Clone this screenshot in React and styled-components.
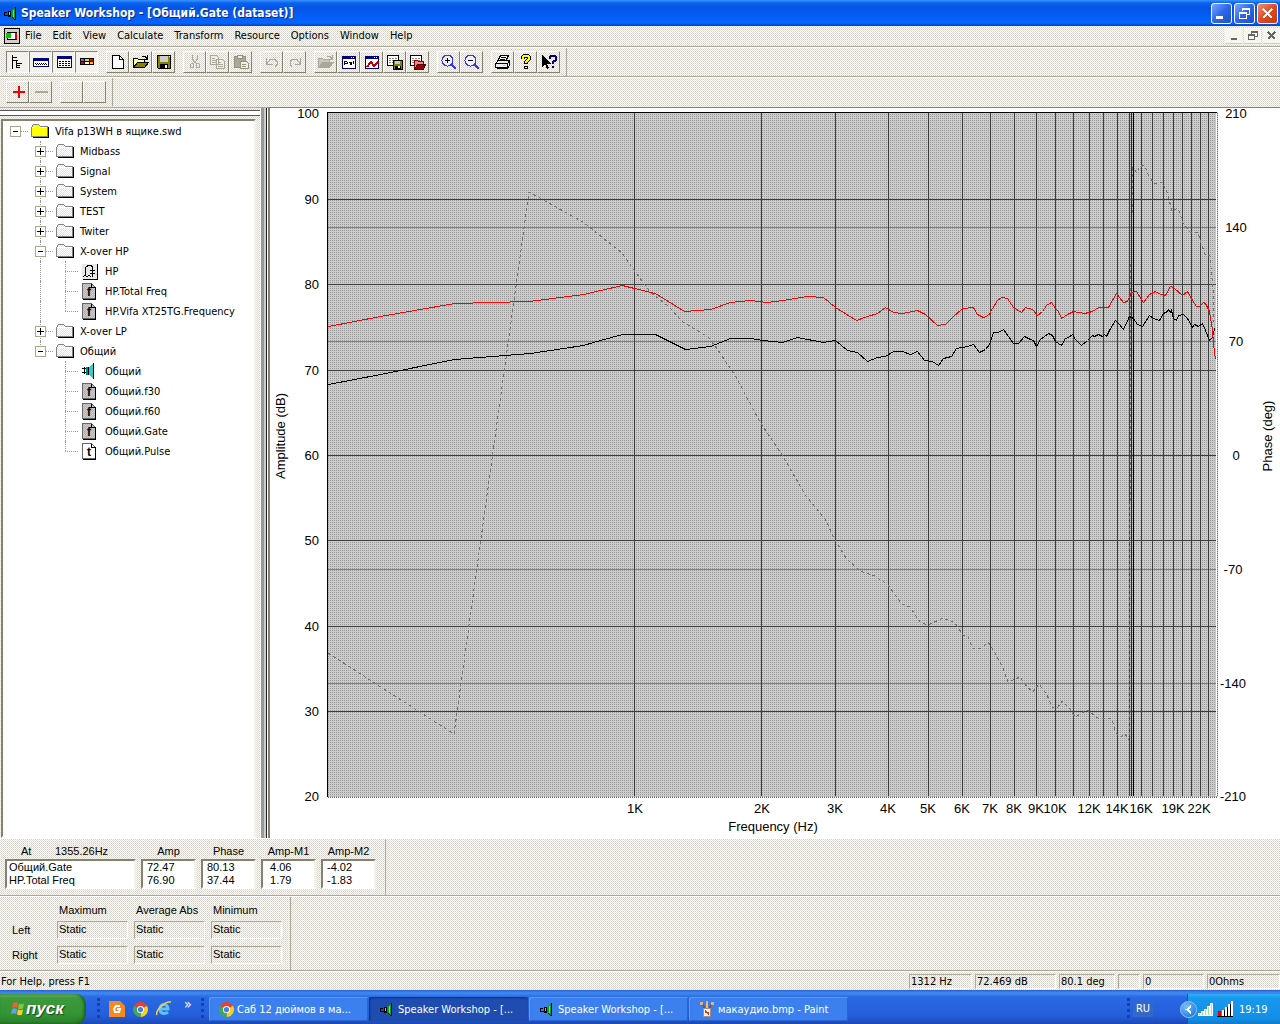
import React, { useState } from 'react';
import styled, { createGlobalStyle, css } from 'styled-components';

const UI_FONT = `"DejaVu Sans Condensed", "Noto Sans", sans-serif`;
const DIALOG_FONT = `"Liberation Sans", Arial, sans-serif`;

const GlobalStyle = createGlobalStyle`
  * { box-sizing: border-box; }
  body {
    margin: 0;
    font-family: ${UI_FONT};
    font-size: 11px;
    color: #000;
  }
  button {
    font: inherit;
    color: inherit;
    padding: 0;
    margin: 0;
    background: none;
    border: none;
  }
  svg { shape-rendering: crispEdges; display: block; }
`

// 256 colour face: four tones in a 2x2 cell
const face = css`
  background: conic-gradient(#ffffcc 25%, #d0d0cc 0 50%, #ffffff 0 75%, #e2e0d8 0) 0 0 / 2px 2px;
`

const Page = styled.div`
  min-height: 100vh;
  display: flex;
  flex-direction: column;
  ${face}
`

/* ---------- title bar ---------- */
const TitleBar = styled.header`
  height: 26px;
  display: flex;
  align-items: center;
  gap: 2px;
  padding: 0 2px 0 3px;
  background: linear-gradient(#3a93ff 0, #0a63ee 3px, #0554e4 8px, #0460f8 18px, #0366ff 23px, #0040c0 26px);
`
const Title = styled.h1`
  flex: 1;
  margin: 0;
  font-size: 12px;
  line-height: 16px;
  font-weight: bold;
  color: #fff;
  text-shadow: 1px 1px 0 #0a2a80;
  white-space: nowrap;
`
const CaptionButton = styled.button`
  width: 21px;
  height: 21px;
  display: flex;
  align-items: center;
  justify-content: center;
  border: 1px solid #fff;
  border-radius: 3px;
  background: ${props => props.$close
    ? 'linear-gradient(135deg, #f09078, #dc4a24 50%, #c03c14)'
    : 'linear-gradient(135deg, #7aa8ff, #2e66e8 50%, #1c50cc)'};
`

/* ---------- menu ---------- */
const MenuBar = styled.nav`
  height: 21px;
  display: flex;
  align-items: center;
  padding-left: 4px;
  border-bottom: 1px solid #aca899;
`
const MenuItems = styled.div`
  flex: 1;
  display: flex;
  gap: 11px;
  padding: 0 0 2px 5px;
`
const MenuItem = styled.button`
  line-height: 15px;
`
const MdiButtons = styled.div`
  display: flex;
  gap: 2px;
`
const MdiButton = styled.button`
  width: 17px;
  height: 16px;
  display: flex;
  align-items: center;
  justify-content: center;
  background: #f6f5ee;
  border-bottom: 1px solid #d0cdbc;
`

/* ---------- tool bars ---------- */
const ToolRow = styled.div`
  height: 30px;
  display: flex;
  border-top: 1px solid #fff;
  border-bottom: 1px solid ${props => props.$last ? 'transparent' : '#aca899'};
`
const Toolbar = styled.div`
  display: flex;
  align-items: center;
  gap: 8px;
  padding: 0 6px;
  border-right: 1px solid #aca899;
`
const ToolGroup = styled.div`
  display: flex;
`
const ToolButton = styled.button`
  width: 23px;
  height: 22px;
  display: flex;
  align-items: center;
  justify-content: center;
  border: 1px solid;
  border-color: ${props => props.$pressed ? '#848284 #fff #fff #848284' : '#fff #84826f #84826f #fff'};
  ${props => props.$pressed && 'background: #f3f2ea;'}
`

/* ---------- workspace ---------- */
const Workspace = styled.main`
  flex: 1;
  display: flex;
  min-height: 0;
`
const Sidebar = styled.aside`
  width: 268px;
  display: flex;
  border-top: 1px solid #aca899;
`
const Dock = styled.div`
  flex: 1;
  display: flex;
  flex-direction: column;
`
const Grip = styled.div`
  height: 6px;
  margin: 2px 0 3px;
  border: solid #555;
  border-width: 1px 0;
  background: #fff;
`
const Splitter = styled.div`
  width: 8px;
  background: linear-gradient(90deg, #fff 0 1px, #999 1px 4px, #ccc 4px 6px, #222 6px 7px, #fff 7px);
`
const TreeBox = styled.div`
  flex: 1;
  margin: 0 4px 0 1px;
  border: 2px solid;
  border-color: #84826f #f4f3ea #fff #84826f;
  background: #fff;
`
const TreeList = styled.ul`
  list-style: none;
  margin: 0;
  padding: 0;
`
const TreeRow = styled.div`
  height: 20px;
  display: flex;
  align-items: center;
`
const Guide = styled.span`
  position: relative;
  width: 25px;
  height: 20px;
  flex: none;
  display: flex;
  align-items: center;
  justify-content: center;
  &::before {
    content: '';
    position: absolute;
    left: 12px;
    top: 0;
    height: ${props => ({ full: '20px', half: '10px', none: '0' })[props.$line]};
    border-left: 1px dotted #999;
  }
  &::after {
    content: '';
    position: absolute;
    left: 12px;
    top: 10px;
    width: ${props => props.$branch ? '13px' : '0'};
    border-top: 1px dotted #999;
  }
`
const Toggle = styled.button`
  position: relative;
  z-index: 1;
  width: 11px;
  height: 11px;
  background: #fff;
  border: 1px solid #a8a890;
`
const NodeIcon = styled.span`
  width: 27px;
  padding-left: 3px;
  flex: none;
`
const NodeLabel = styled.span`
  padding-top: 1px;
  line-height: 15px;
  white-space: nowrap;
`

const ChartPane = styled.section`
  flex: 1;
  min-width: 0;
  display: flex;
  background: #fff;
  border: solid #84826f;
  border-width: 1px 0 0 2px;
`
const ChartSvg = styled.svg`
  flex: 1;
  min-width: 0;
  overflow: visible;
  font-family: ${DIALOG_FONT};
  font-size: 13px;
`

/* ---------- readouts ---------- */
const DialogRow = styled.div`
  display: flex;
  height: ${props => props.$height};
  border-top: 1px solid #fff;
  border-bottom: 1px solid #aca899;
  font-family: ${DIALOG_FONT};
`
const DialogBar = styled.div`
  border-right: 1px solid #aca899;
  padding: ${props => props.$pad};
`
const ReadoutTable = styled.table`
  table-layout: fixed;
  width: 381px;
  border-spacing: 5px 0;
  line-height: 13px;
  th {
    height: 16px;
    padding: 0;
    font-weight: normal;
  }
  th:first-child { padding-right: 12px; }
  td {
    padding: 0 4px;
    background: #fff;
    border: 2px solid;
    border-color: #84826f #f4f3ea #fff #84826f;
    white-space: pre;
  }
  td:first-child { padding: 0 2px; }
  tbody tr:first-child td { border-bottom: none; }
  tbody tr:last-child td { border-top: none; }
`
const At = styled.span`
  display: inline-block;
  width: 34px;
  text-align: left;
`
const StatsTable = styled.table`
  border-spacing: 0;
  table-layout: fixed;
  width: 288px;
  th, td {
    height: 25px;
    padding: 0;
    font-weight: normal;
    text-align: left;
  }
  thead th, thead td { height: 15px; }
  thead th { padding-left: 2px; }
  tbody th { padding-left: 12px; }
`
const StaticBox = styled.div`
  width: 71px;
  height: 18px;
  padding-left: 1px;
  line-height: 15px;
  border: 1px solid;
  border-color: #aca899 #fff #fff #aca899;
`

/* ---------- status ---------- */
const StatusBar = styled.footer`
  height: 19px;
  display: flex;
  gap: 3px;
  padding: 2px 0 1px 1px;
  line-height: 15px;
  border-top: 1px solid #fff;
`
const StatusHelp = styled.span`
  flex: 1;
`
const StatusPane = styled.span`
  width: ${props => props.$width};
  padding-left: 1px;
  border: 1px solid;
  border-color: #aca899 #fff #fff #aca899;
  line-height: 14px;
`

/* ---------- task bar ---------- */
const TaskBar = styled.div`
  height: 34px;
  display: flex;
  color: #fff;
  background: linear-gradient(#2c60d8 0, #3f8cf0 3px, #2a68e4 7px, #245edb 26px, #1c48b4 34px);
`
const StartButton = styled.button`
  width: 86px;
  margin-top: 4px;
  padding-left: 10px;
  display: flex;
  align-items: center;
  gap: 1px;
  border-radius: 0 10px 10px 0;
  background: linear-gradient(#6cb868 0, #3c9a3c 4px, #339433 20px, #2a7c2a 30px);
  box-shadow: inset -2px 0 3px #1c5c1c;
  font: italic bold 17px "Liberation Sans", sans-serif;
  text-shadow: 1px 1px 1px #1a4a1a;
`
const TaskGrip = styled.span`
  width: 3px;
  margin: 8px 0 6px ${props => props.$left};
  border-left: 3px dotted #1840a8;
`
const QuickLaunch = styled.div`
  display: flex;
  align-items: center;
  gap: 8px;
  padding: 4px 0 0 9px;
  width: 101px;
  svg { shape-rendering: auto; }
`
const More = styled.span`
  font-size: 14px;
  line-height: 12px;
  padding: 0 0 10px 4px;
`
const Tasks = styled.div`
  flex: 1;
  display: flex;
  gap: 1px;
  padding: 7px 0 3px 5px;
`
const TaskButton = styled.button`
  width: 159px;
  height: 24px;
  padding: 0 10px;
  display: flex;
  align-items: center;
  gap: 3px;
  border-radius: 2px;
  white-space: nowrap;
  background: ${props => props.$active ? '#1e4cb0' : '#3c80f0'};
  box-shadow: ${props => props.$active ? 'inset 1px 1px 2px #10307c' : 'inset 1px 1px 0 #5c9cf8, inset -1px -1px 0 #2c64d0'};
`
const Lang = styled.span`
  align-self: center;
  margin: 4px 34px 0 3px;
  padding: 0 3px;
  line-height: 16px;
  background: #3468c8;
`
const Tray = styled.div`
  position: relative;
  width: 93px;
  margin-top: 4px;
  display: flex;
  align-items: center;
  gap: 3px;
  padding-left: 10px;
  background: linear-gradient(#2cb0f8 0, #1898ec 4px, #1290e8 24px, #1078c8 30px);
  border-left: 1px solid #0c5cb0;
`
const TrayArrow = styled.button`
  position: absolute;
  left: -8px;
  top: 7px;
  width: 17px;
  height: 17px;
  border-radius: 50%;
  border: 1px solid #8cc8ff;
  background: radial-gradient(circle at 35% 30%, #78c0ff, #1468d8);
  display: flex;
  align-items: center;
  justify-content: center;
`
const Clock = styled.time`
  padding-left: 3px;
`

/* ---------- drawings ---------- */
const Svg = ({ w = 16, h = 16, children }) => (
  <svg width={w} height={h} viewBox={`0 0 ${w} ${h}`} fill="none" aria-hidden="true">{children}</svg>
)

const Patterns = () => (
  <svg width="0" height="0" style={{ position: 'absolute' }} aria-hidden="true">
    <defs>
      <pattern id="yellow" width="2" height="2" patternUnits="userSpaceOnUse">
        <path fill="#ffffff" d="M0 0h2v2H0z" /><path fill="#ffff00" d="M0 0h1v1H0zM1 1h1v1H1z" />
      </pattern>
      <pattern id="cyan" width="2" height="2" patternUnits="userSpaceOnUse">
        <path fill="#cccccc" d="M0 0h2v2H0z" /><path fill="#00ffff" d="M0 0h1v1H0zM1 1h1v1H1z" />
      </pattern>
      <pattern id="plot" width="2" height="2" patternUnits="userSpaceOnUse">
        <path fill="#cccccc" d="M0 0h2v2H0z" /><path fill="#999999" d="M0 0h1v1H0z" />
      </pattern>
    </defs>
  </svg>
)

// small green loudspeaker with its lead, used for the program itself
const SpeakerIcon = () => (
  <Svg>
    <path fill="#000" d="M1 7h3v1H1zM1 8h1v3H1zM2 10h5v1H2zM5 6h3v6H5z" />
    <path fill="#00a030" d="M8 6h1V5h1V4h1V3h1v11h-1v-1h-1v-1H9v-1H8z" />
    <path fill="#40ff60" d="M10 5h1v7h-1zM6 7h1v3H6z" />
    <path fill="#000" d="M12 2h1v13h-1zM9 12h1v1h1v1h1v1h-1v-1h-1v-1H9z" />
  </Svg>
)
const FolderIcon = ({ fill = 'url(#yellow)' }) => (
  <Svg w={18} h={16}>
    <path fill="#000" d="M2 14h16v1H2zM17 4h1v11h-1z" />
    <path fill={fill} stroke="#848484" d="M.5 13.500v-9l2-3h5l2 2h7v10z" />
    <path stroke="#fff" d="M1 4.500h15" />
  </Svg>
)
const PageIcon = ({ letter, fill }) => (
  <Svg w={16} h={18}>
    <path fill={fill} stroke="#666" d="M1.500 1.500h9l4 4v11h-13z" />
    <path stroke="#000" d="M14.500 5v12M2 17.500h13M10.500 2v3.500h4" />
    <text x="8" y="14" textAnchor="middle" fontFamily="Liberation Sans" fontWeight="bold" fontSize="12" fill="#000">{letter}</text>
  </Svg>
)
const CircuitIcon = () => (
  <Svg w={17} h={17}>
    <path fill="#e8e8e4" d="M1 1h15v15H1z" />
    <path stroke="#000" d="M2 16.500h15M16.500 1v16" />
    <path stroke="#000" d="M4.500 13V3.500M5 3.500h1l1-1h3l1 1h1M11.500 3v4M9 7.500h5M9 10.500h5M11.500 7v7M2 14l2-2 2 2 2-2 2 2" />
  </Svg>
)
const DriverIcon = () => (
  <Svg w={16} h={16}>
    <path stroke="#000" d="M1 5.500h4M1 9.500h4M3.500 4v7" />
    <path fill="#008484" d="M5 4h3v8H5z" />
    <path fill="#33cccc" d="M8 4l4-4v16l-4-4z" />
    <path fill="#000" d="M12 0h1v16h-1zM7 4h1v8H7z" />
  </Svg>
)

const ICONS = {
  tree: <><path stroke="#000" d="M2.500 1v14M3 3.500h4M3 6.500h5M6.500 7v7M6 9.500h6M6 11.500h4M6 13.500h4" /></>,
  bar: <><path fill="#fff" stroke="#000084" d="M.5 4.500h15v8H.5z" /><path fill="#000084" d="M0 4h16v3H0z" /><path stroke="#000" strokeDasharray="1 1" d="M2 9.500h12M3 10.500h11" /></>,
  panel: <><path fill="#fff" stroke="#000084" d="M1.500 2.500h14v11h-14z" /><path fill="#000084" d="M1 2h15v3H1z" /><path stroke="#000" strokeDasharray="2 1" d="M3 7.500h11M3 9.500h11M3 11.500h11" /></>,
  cells: <><path fill="#fff" stroke="#000" d="M1.500 4.500h13v6h-13z" /><path fill="#6666ee" d="M2 5h4v2H2z" /><path fill="#ffcc00" d="M6 5h4v2H6z" /><path fill="#e00000" d="M10 5h4v2h-4zM2 8h4v2H2z" /><path fill="#ffcc00" d="M11 8h3v2h-3z" /><path stroke="#000" d="M5.500 5v5M10.500 5v5M2 7.500h12" /></>,
  new: <path fill="#fff" stroke="#000" d="M2.500 1.500h7l4 4v9h-11zM9.500 1.500v4h4" />,
  open: <><path fill="#ffff99" stroke="#000" d="M.5 13.500v-9h4l1 1h6v3h-6l-5 5" /><path fill="#848400" stroke="#000" d="M.5 13.500l4-5h11l-4 5z" /><path stroke="#000" d="M9 2.500h3l2 2M14.500 1v4h-3" /></>,
  save: <><path fill="#848400" stroke="#000" d="M1.500 1.500h13v13h-12l-1-1z" /><path fill="#ccc" d="M4 2h8v6H4z" /><path fill="#000" d="M4 10h8v4H4z" /><path fill="#fff" d="M9 11h2v3H9zM13 2h1v1h-1z" /></>,
  cut: <><path stroke="#aca899" d="M5.500 1v4l3 4M10.500 1v4l-3 4" /><path stroke="#aca899" d="M4.500 9.500h2v4h-3v-3zM9.500 9.500h2l1 1v3h-3z" /></>,
  copy: <path fill="#eee" stroke="#aca899" d="M.5 1.500h6l2 2v7h-8zM6.500 5.500h6l2 2v7h-8zM2 4.500h3M2 6.500h4M2 8.500h4M8 8.500h3M8 10.500h5M8 12.500h5" />,
  paste: <><path fill="#aca899" stroke="#94927c" d="M1.500 2.500h11v11h-11z" /><path fill="#eee" stroke="#94927c" d="M4.500 1.500h5v3h-5zM7.500 7.500h6l2 2v5h-8zM9 10.500h4M9 12.500h4" /></>,
  undo: <path stroke="#aca899" d="M2.500 4v6h6M3 9.500l3-4h5l2 2v3l-2 2" />,
  redo: <path stroke="#aca899" d="M13.500 4v6h-6M13 9.500l-3-4h-5l-2 2v3l2 2" />,
  openOff: <><path fill="#ccc8b8" stroke="#aca899" d="M.5 13.500v-9h4l1 1h6v3" /><path fill="#aca899" d="M0 14l4-6h12l-4 6z" /><path stroke="#aca899" d="M9 2.500h3l2 2M14.500 1v4h-3" /></>,
  props: <><path fill="#fff" stroke="#000084" d="M1.500 2.500h13v12h-13z" /><path fill="#000084" d="M1 2h14v3H1z" /><path fill="#fff" d="M10 3h1v1h-1zM12 3h1v1h-1z" /><path stroke="#000" d="M3.500 7v4M4 7.500h2M4 9.500h2M6.500 8v2M7.500 8.500h2v2M10.500 8v3M12.500 7v3" /></>,
  chart: <><path fill="#fff" stroke="#000084" d="M1.500 2.500h13v12h-13z" /><path fill="#000084" d="M1 2h14v3H1z" /><path fill="#fff" d="M10 3h1v1h-1zM12 3h1v1h-1z" /><path stroke="#c00000" strokeWidth="2" d="M3 13l4-5 3 4 4-4" /></>,
  saveSheet: <><path fill="#fff" stroke="#000" d="M.5 1.500h11v10H.5z" /><path stroke="#848484" strokeDasharray="2 1" d="M2 4.500h9M2 6.500h9M2 8.500h9" /><path fill="#848400" stroke="#000" d="M6.500 6.500h9v9h-9z" /><path fill="#ccc" d="M8 7h5v3H8z" /><path fill="#000" d="M8 12h6v3H8z" /><path fill="#fff" d="M11 12h2v2h-2z" /></>,
  loadSheet: <><path fill="#fff" stroke="#000" d="M.5 1.500h11v10H.5z" /><path stroke="#848484" strokeDasharray="2 1" d="M2 4.500h9M2 6.500h9M2 8.500h9" /><path fill="#ff8080" stroke="#840000" d="M4.500 14.500v-8h3l1 1h5v3" /><path fill="#a00000" stroke="#400000" d="M4.500 15.500l3-5h8l-2 5z" /></>,
  zoomIn: <><circle cx="6.500" cy="6.500" r="5.500" fill="#f0f0ff" stroke="#3333ff" /><path stroke="#3333ff" strokeWidth="2" d="M11 11l4 4" /><path stroke="#000" d="M4 6.500h5M6.500 4v5" /></>,
  zoomOut: <><circle cx="6.500" cy="6.500" r="5.500" fill="#f0f0ff" stroke="#3333ff" /><path stroke="#3333ff" strokeWidth="2" d="M11 11l4 4" /><path stroke="#000" d="M4 6.500h5" /></>,
  print: <><path fill="#fff" stroke="#000" d="M5.500 1.500h8l-3 6h-8z" /><path fill="#eee" stroke="#000" d="M.5 9.500l3-3h11l-2 3zM.5 9.500h12v4H.5zM12.500 9.500l2-3v5l-2 2.500" /><path stroke="#000" d="M6 3.500h5M5 5.500h5M2 14.500h11" /><path fill="#e8e800" d="M8 11h3v1H8z" /></>,
  help: <><path stroke="#000" strokeWidth="4" d="M5 5V3l1-1h4l1 1v2L8 8v2M8 12v3" /><path stroke="#ffff00" strokeWidth="2" d="M5 5V3l1-1h4l1 1v2L8 8v1M8 13v1" /></>,
  whatsThis: <><path fill="#000" d="M1 1v12l3-3 2 5 2-1-2-4h4z" /><path stroke="#000084" strokeWidth="2" d="M9 5V3l1-1h4l1 1v3l-3 2v2M12 12v2" /></>,
  plus: <path stroke="#f00000" strokeWidth="2" d="M3 8h12M9 2v12" />,
  minus: <path stroke="#aca899" strokeWidth="2" d="M2 8h13" />,
}

const ChromeIcon = () => (
  <svg width="15" height="15" viewBox="0 0 16 16" style={{ shapeRendering: 'auto' }} aria-hidden="true">
    <path fill="#e84030" d="M8 8L1.100 4A8 8 0 0 1 14.900 4z" />
    <path fill="#f8d020" d="M8 8l6.900-4A8 8 0 0 1 8 16z" />
    <path fill="#40a850" d="M8 8v8A8 8 0 0 1 1.100 4z" />
    <circle cx="8" cy="8" r="3.800" fill="#fff" /><circle cx="8" cy="8" r="2.800" fill="#4080e8" />
  </svg>
)
const PaintIcon = () => (
  <Svg>
    <path stroke="#905030" strokeWidth="2" d="M3 2l3 6M13 2l-3 6" />
    <path stroke="#e8c070" strokeWidth="2" d="M8 1v7" />
    <path fill="#d8b090" d="M1 1h3v3H1zM12 1h3v3h-3zM7 0h2v2H7z" />
    <path fill="#f4f0f0" stroke="#a09088" d="M4.500 7.500h7v8h-7z" />
    <path stroke="#d04020" strokeWidth="2" d="M6 10l4 3" />
  </Svg>
)
const FlagIcon = () => (
  <svg width="15" height="16" viewBox="0 0 15 16" style={{ shapeRendering: 'auto' }} aria-hidden="true">
    <path fill="#f06030" d="M3 2c2-1 3-1 5 0L7 7c-2-1-3-1-5 0z" />
    <path fill="#80c840" d="M9 2.500c2 1 3 1 5 0l-1 5c-2 1-3 1-5 0z" />
    <path fill="#60a0f0" d="M2 8c2-1 3-1 5 0l-1 5c-2-1-3-1-5 0z" />
    <path fill="#f8d030" d="M8 8.500c2 1 3 1 5 0l-1 5c-2 1-3 1-5 0z" />
  </svg>
)

/* ---------- chart data ---------- */
const freqLines = [634, 761, 835, 888, 928, 962, 990, 1014, 1036, 1055, 1073, 1089, 1103, 1117, 1129, 1141, 1152, 1163, 1173, 1182, 1191, 1200, 1208]
const freqLabels = [['1K', 635], ['2K', 762], ['3K', 835], ['4K', 888], ['5K', 928], ['6K', 962], ['7K', 990], ['8K', 1014], ['9K', 1036], ['10K', 1055], ['12K', 1089], ['14K', 1117], ['16K', 1141], ['19K', 1173], ['22K', 1199]]
const ampLabels = [[100, 113], [90, 199], [80, 284], [70, 370], [60, 455], [50, 540], [40, 626], [30, 711], [20, 796]]
const phaseLabels = [[210, 113], [140, 227], [70, 341], [0, 455], [-70, 569], [-140, 683], [-210, 796]]

const totalCurve = '328,326 380,316 454,303 529,301 583,294 600,290 622,285 634,288 655,293 684,311 710,309 730,302 750,300 767,302 782,300 807,296 823,297 835,307 856,320 867,316 877,313 885,307 893,312 902,313 917,310 925,314 937,325 945,324 952,317 962,308 973,307 977,314 983,317 988,315 992,308 997,300 1001,297 1007,298 1013,307 1021,312 1025,307 1032,309 1037,315 1042,311 1046,305 1051,302 1055,308 1058,311 1061,318 1067,314 1073,311 1084,313 1092,311 1098,307 1108,307 1112,300 1116,293 1119,297 1123,302 1127,301 1131,292 1136,291 1143,302 1149,294 1155,291 1160,294 1165,295 1170,286 1173,287 1182,295 1187,291 1192,300 1196,306 1199,306 1203,302 1205,303 1209,311 1212,330 1213,343 1215,359'
const gateCurve = '328,384 380,374 454,359 530,353 583,345 600,340 622,334 655,334 685,349 710,346 730,338 750,338 763,340 782,342 797,337 823,342 835,340 847,350 857,352 867,361 877,357 885,356 893,351 902,351 910,354 917,351 924,360 932,361 938,365 943,358 951,356 956,348 967,346 973,344 979,352 985,349 989,344 993,332 998,332 1003,329 1008,336 1013,343 1018,343 1024,336 1030,339 1033,340 1036,346 1040,339 1048,333 1052,335 1055,341 1061,345 1065,338 1068,337 1072,334 1075,339 1081,345 1087,340 1092,335 1094,336 1098,334 1102,336 1104,334 1106,336 1110,328 1115,320 1118,323 1123,329 1129,316 1133,318 1137,324 1142,326 1149,315 1153,318 1159,320 1163,313 1167,311 1168,309 1170,312 1171,310 1173,318 1176,320 1178,315 1183,314 1187,318 1192,327 1194,324 1198,326 1202,323 1205,330 1209,340 1212,337 1214,328'
const phaseCurve = '328,653 454,734 529,192 583,222 622,253 634,270 650,292 668,306 683,322 708,337 718,350 736,377 760,422 782,455 806,496 825,519 835,540 846,558 860,571 875,576 888,585 893,592 902,604 910,607 920,622 928,625 943,618 955,623 963,635 968,637 973,648 982,648 988,642 995,653 1003,668 1008,682 1020,677 1027,687 1033,692 1039,684 1047,695 1052,707 1058,707 1062,701 1070,709 1075,717 1087,710 1098,718 1110,718 1113,723 1116,733 1121,737 1125,734 1129,740 1131,262 1133,168 1137,173 1139,167 1144,165 1150,178 1155,184 1162,182 1167,192 1172,211 1178,208 1183,223 1190,232 1198,232 1201,243 1205,254 1210,256 1213,290 1214,322'

const Chart = () => (
  <ChartSvg viewBox="270 108 1010 730" role="img" aria-label="Amplitude and phase against frequency">
    <rect x="327" y="112" width="891" height="685" fill="url(#plot)" />
    {phaseLabels.slice(1, -1).map(([v, y]) => <path key={v} stroke="#808080" d={`M328 ${y + 0.5}H1216`} />)}
    {ampLabels.slice(1, -1).map(([v, y]) => <path key={v} stroke="#3c3c3c" d={`M328 ${y + 0.5}H1216`} />)}
    {freqLines.map(x => <path key={x} stroke="#3c3c3c" d={`M${x + 0.5} 113V796`} />)}
    <path stroke="#000" fill="none" d="M327 112.500H1217M327.500 112V797" />
    <path stroke="#fff" fill="none" d="M1216.500 113V796" />
    <path stroke="#666" fill="none" strokeDasharray="1 1" d="M1217.500 113V797M328 797.500H1217" />
    <polyline points={phaseCurve} fill="none" stroke="#707070" strokeDasharray="3 3" />
    <path stroke="#880000" d="M1131.500 113V796" />
    <path stroke="#000" d="M1133.500 113V796" />
    <polyline points={gateCurve} transform="translate(0.5 0.5)" fill="none" stroke="#000" />
    <polyline points={totalCurve} transform="translate(0.5 0.5)" fill="none" stroke="#ff0000" />
    {ampLabels.map(([v, y]) => <text key={v} x="319" y={y + 5} textAnchor="end">{v}</text>)}
    {phaseLabels.map(([v, y]) => <text key={v} x={v < 0 ? 1233 : 1236} y={y + 5} textAnchor="middle">{v}</text>)}
    {freqLabels.map(([v, x]) => <text key={v} x={x} y="813" textAnchor="middle">{v}</text>)}
    <text x="773" y="831" textAnchor="middle">Frequency (Hz)</text>
    <text transform="translate(285 436) rotate(-90)" textAnchor="middle">Amplitude (dB)</text>
    <text transform="translate(1272 436) rotate(-90)" textAnchor="middle">Phase (deg)</text>
  </ChartSvg>
)

/* ---------- project tree ---------- */
const f = <PageIcon letter="f" fill="url(#cyan)" />
const project = {
  name: 'Vifa p13WH в ящике.swd', icon: <FolderIcon fill="#ffff00" />, open: true, children: [
    { name: 'Midbass', children: [] },
    { name: 'Signal', children: [] },
    { name: 'System', children: [] },
    { name: 'TEST', children: [] },
    { name: 'Twiter', children: [] },
    {
      name: 'X-over HP', open: true, children: [
        { name: 'HP', icon: <CircuitIcon /> },
        { name: 'HP.Total Freq', icon: f },
        { name: 'HP.Vifa XT25TG.Frequency', icon: f },
      ]
    },
    { name: 'X-over LP', children: [] },
    {
      name: 'Общий', open: true, children: [
        { name: 'Общий', icon: <DriverIcon /> },
        { name: 'Общий.f30', icon: f },
        { name: 'Общий.f60', icon: f },
        { name: 'Общий.Gate', icon: f },
        { name: 'Общий.Pulse', icon: <PageIcon letter="t" fill="#fff" /> },
      ]
    },
  ]
}

function TreeNode({ node, guides = [], root, last }) {
  const [open, setOpen] = useState(!!node.open)
  const below = root ? ['none'] : [...guides, last ? 'none' : 'full']
  return (
    <li>
      <TreeRow>
        {guides.map((line, i) => <Guide key={i} $line={line} />)}
        <Guide $line={root ? 'none' : last ? 'half' : 'full'} $branch>
          {node.children && (
            <Toggle aria-label={open ? 'Collapse' : 'Expand'} onClick={() => setOpen(!open)}>
              <Svg w={9} h={9}><path stroke="#000" d={open ? 'M2 4.500h5' : 'M1 4.500h7M4.500 1v7'} /></Svg>
            </Toggle>
          )}
        </Guide>
        <NodeIcon>{node.icon || <FolderIcon />}</NodeIcon>
        <NodeLabel>{node.name}</NodeLabel>
      </TreeRow>
      {open && node.children.length > 0 && (
        <TreeList>
          {node.children.map((child, i) => (
            <TreeNode
              key={child.name}
              node={child}
              guides={below}
              last={i === node.children.length - 1}
            />
          ))}
        </TreeList>
      )}
    </li>
  )
}

/* ---------- page data ---------- */
const menus = ['File', 'Edit', 'View', 'Calculate', 'Transform', 'Resource', 'Options', 'Window', 'Help']
const tools = [
  ['tree', 'bar', 'panel', 'cells'],
  ['new', 'open', 'save'],
  ['cut', 'copy', 'paste'],
  ['undo', 'redo'],
  ['openOff', 'props', 'chart', 'saveSheet', 'loadSheet'],
  ['zoomIn', 'zoomOut'],
  ['print', 'help', 'whatsThis'],
]
const markerTools = [['plus', 'minus'], ['blank1', 'blank2']]
const readout = [
  ['Общий.Gate', '72.47', '80.13', ' 4.06', '-4.02'],
  ['HP.Total Freq', '76.90', '37.44', ' 1.79', '-1.83'],
]
const status = [['1312 Hz', '63px'], ['72.469 dB', '81px'], ['80.1 deg', '56px'], ['', '22px'], ['0', '61px'], ['0Ohms', '73px']]

const ToolGroups = ({ groups, pressed }) => groups.map((group, i) => (
  <ToolGroup key={i}>
    {group.map(name => (
      <ToolButton key={name} aria-label={name} $pressed={pressed && i === 0}>
        <Svg>{ICONS[name]}</Svg>
      </ToolButton>
    ))}
  </ToolGroup>
))

export default function App() {
  return (
    <Page>
      <GlobalStyle />
      <Patterns />
      <TitleBar>
        <SpeakerIcon />
        <Title>Speaker Workshop - [Общий.Gate (dataset)]</Title>
        <CaptionButton aria-label="Minimize"><Svg w={13} h={13}><path fill="#fff" d="M1 9h7v3H1z" /></Svg></CaptionButton>
        <CaptionButton aria-label="Restore"><Svg w={13} h={13}><path stroke="#fff" d="M4.500 4V1.500h7v6H9M4 2h8M1.500 5.500h7v6h-7zM1 6h8" /></Svg></CaptionButton>
        <CaptionButton aria-label="Close" $close><Svg w={13} h={13}><path stroke="#fff" strokeWidth="2" d="M2 2l9 9M11 2l-9 9" /></Svg></CaptionButton>
      </TitleBar>

      <MenuBar>
        <Svg>
          <path fill="#d4d0c8" stroke="#000" d="M.5.5h15v15H.5z" />
          <path fill="#fff" stroke="#000" d="M3.500 4.500h9v7h-9z" />
          <path fill="#00cc00" d="M2 5h5v5H2z" /><path fill="#e00000" d="M11 5h2v6h-2z" />
        </Svg>
        <MenuItems>
          {menus.map(name => <MenuItem key={name}>{name}</MenuItem>)}
        </MenuItems>
        <MdiButtons>
          <MdiButton aria-label="Minimize document"><Svg w={10} h={10}><path fill="#666" d="M2 7h6v2H2z" /></Svg></MdiButton>
          <MdiButton aria-label="Restore document"><Svg w={10} h={10}><path stroke="#666" d="M3.500 3V.5h6v5H7M3 1h7M.5 3.500h6v5h-6zM0 4h7" /></Svg></MdiButton>
          <MdiButton aria-label="Close document"><Svg w={10} h={10}><path stroke="#666" strokeWidth="2" d="M1 1l7 7M8 1L1 8" /></Svg></MdiButton>
        </MdiButtons>
      </MenuBar>

      <ToolRow>
        <Toolbar><ToolGroups groups={tools} pressed /></Toolbar>
      </ToolRow>
      <ToolRow $last>
        <Toolbar><ToolGroups groups={markerTools} /></Toolbar>
      </ToolRow>

      <Workspace>
        <Sidebar>
          <Dock>
            <Grip />
            <TreeBox>
              <TreeList><TreeNode node={project} root last /></TreeList>
            </TreeBox>
          </Dock>
          <Splitter />
        </Sidebar>
        <ChartPane><Chart /></ChartPane>
      </Workspace>

      <DialogRow $height="58px">
        <DialogBar $pad="4px 4px 0 0">
          <ReadoutTable>
            <colgroup><col style={{ width: '131px' }} /><col /><col /><col /><col /></colgroup>
            <thead>
              <tr><th><At>At</At>1355.26Hz</th><th>Amp</th><th>Phase</th><th>Amp-M1</th><th>Amp-M2</th></tr>
            </thead>
            <tbody>
              {readout.map(row => (
                <tr key={row[0]}>{row.map(cell => <td key={cell}>{cell}</td>)}</tr>
              ))}
            </tbody>
          </ReadoutTable>
        </DialogBar>
      </DialogRow>
      <DialogRow $height="75px">
        <DialogBar $pad="5px 2px 0 0">
          <StatsTable>
            <colgroup><col style={{ width: '57px' }} /><col /><col /><col /></colgroup>
            <thead>
              <tr><td /><th>Maximum</th><th>Average Abs</th><th>Minimum</th></tr>
            </thead>
            <tbody>
              {['Left', 'Right'].map(side => (
                <tr key={side}>
                  <th>{side}</th>
                  <td><StaticBox>Static</StaticBox></td>
                  <td><StaticBox>Static</StaticBox></td>
                  <td><StaticBox>Static</StaticBox></td>
                </tr>
              ))}
            </tbody>
          </StatsTable>
        </DialogBar>
      </DialogRow>

      <StatusBar>
        <StatusHelp>For Help, press F1</StatusHelp>
        {status.map(([text, width]) => <StatusPane key={width} $width={width}>{text}</StatusPane>)}
      </StatusBar>

      <TaskBar>
        <StartButton><FlagIcon />пуск</StartButton>
        <TaskGrip $left="11px" />
        <QuickLaunch>
          <Svg><path fill="#f88820" d="M0 0h11l5 5v11H0z" /><path stroke="#fff" strokeWidth="2" d="M11 5H7L5 8l1 3h4l1-3H8" /></Svg>
          <ChromeIcon />
          <Svg>
            <path stroke="#60c0f8" strokeWidth="3" d="M3 8h9c0-6-8-6-8 0s6 5 8 3" />
            <path stroke="#f8d048" strokeWidth="1.500" d="M1 14C-1 10 8 0 15 1" />
          </Svg>
          <More>»</More>
        </QuickLaunch>
        <TaskGrip $left="0" />
        <Tasks>
          <TaskButton><ChromeIcon />Саб 12 дюймов в ма...</TaskButton>
          <TaskButton $active><SpeakerIcon />Speaker Workshop - [...</TaskButton>
          <TaskButton><SpeakerIcon />Speaker Workshop - [...</TaskButton>
          <TaskButton><PaintIcon />макаудио.bmp - Paint</TaskButton>
        </Tasks>
        <TaskGrip $left="0" />
        <Lang>RU</Lang>
        <Tray>
          <TrayArrow aria-label="Show hidden icons"><Svg w={7} h={9}><path stroke="#fff" strokeWidth="2" d="M6 1L2 4.500 6 8" /></Svg></TrayArrow>
          <Svg><path fill="#90e890" stroke="#fff" d="M.5 12.500h2v2h-2zM3.500 10.500h2v4h-2zM6.500 8.500h2v6h-2zM9.500 5.500h2v9h-2z" /><path fill="#ccc" stroke="#fff" d="M12.500 2.500h2v12h-2z" /></Svg>
          <Svg><path fill="#e00000" d="M1 10h3v5H1z" /><path stroke="#fff" strokeWidth="2" d="M6 15V9M9 15V6M12 15V3M15 15V0" /><path stroke="#000" d="M0 15.500h16M7.500 9v6M10.500 6v9M13.500 3v12" /></Svg>
          <Clock>19:19</Clock>
        </Tray>
      </TaskBar>
    </Page>
  )
}
